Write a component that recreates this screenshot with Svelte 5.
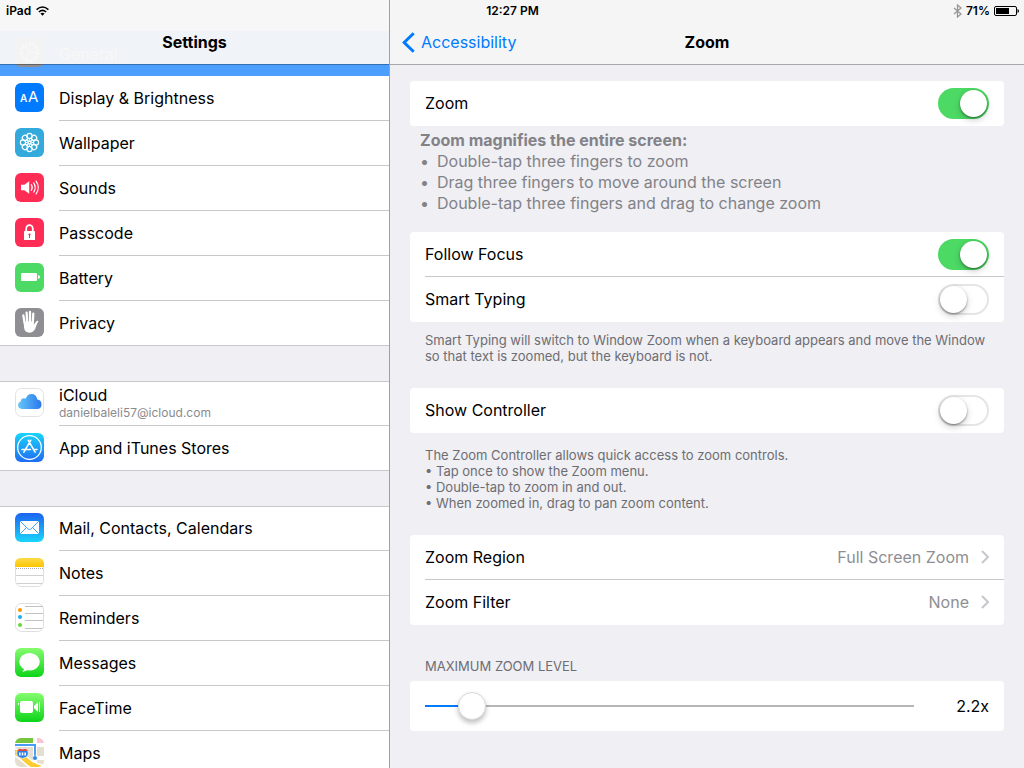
<script lang="ts">
  type Item = { id: string; label: string; detail?: string };

  const groups: Item[][] = [
    [
      { id: 'display', label: 'Display & Brightness' },
      { id: 'wallpaper', label: 'Wallpaper' },
      { id: 'sounds', label: 'Sounds' },
      { id: 'passcode', label: 'Passcode' },
      { id: 'battery', label: 'Battery' },
      { id: 'privacy', label: 'Privacy' }
    ],
    [
      { id: 'icloud', label: 'iCloud', detail: 'danielbaleli57@icloud.com' },
      { id: 'stores', label: 'App and iTunes Stores' }
    ],
    [
      { id: 'mail', label: 'Mail, Contacts, Calendars' },
      { id: 'notes', label: 'Notes' },
      { id: 'reminders', label: 'Reminders' },
      { id: 'messages', label: 'Messages' },
      { id: 'facetime', label: 'FaceTime' },
      { id: 'maps', label: 'Maps' }
    ]
  ];

  const petals = [0, 45, 90, 135, 180, 225, 270, 315];
  const minZoom = 1.2;
  const maxZoom = 15;

  let zoom = $state(true);
  let followFocus = $state(true);
  let smartTyping = $state(false);
  let showController = $state(false);
  let level = $state(2.2);

  let filled = $derived(((level - minZoom) / (maxZoom - minZoom)) * 100);
</script>

{#snippet icon(id: string)}
  <svg class="icon" viewBox="0 0 29 29" aria-hidden="true">
    {#if id === 'general'}
      <rect width="29" height="29" rx="6" fill="#8e8e93" />
      <circle cx="14.5" cy="14.5" r="8" fill="none" stroke="#fff" stroke-width="1.5" />
      <circle cx="14.5" cy="14.5" r="9.5" fill="none" stroke="#fff" stroke-width="2" stroke-dasharray="2 2" />
      <path d="M14.5 14.5h8M14.5 14.5l-4-7M14.5 14.5l-4 7" stroke="#fff" stroke-width="1.3" />
    {:else if id === 'display'}
      <rect width="29" height="29" rx="6" fill="#007aff" />
      <text x="5" y="19" font-size="10" font-weight="600" fill="#fff">A</text>
      <text x="13" y="19" font-size="15" fill="#fff">A</text>
    {:else if id === 'wallpaper'}
      <rect width="29" height="29" rx="6" fill="#34aadc" />
      <g fill="none" stroke="#fff" stroke-width="1.2">
        {#each petals as angle}
          <circle cx="14.5" cy="8" r="2.6" transform="rotate({angle} 14.5 14.5)" />
          <circle cx="14.5" cy="11.3" r="1.3" stroke-width="0.8" transform="rotate({angle + 22.5} 14.5 14.5)" />
        {/each}
        <circle cx="14.5" cy="14.5" r="1.4" />
      </g>
    {:else if id === 'sounds'}
      <rect width="29" height="29" rx="6" fill="#ff2d55" />
      <path d="M6 11.7h3.4l4.8-3.4v12.4l-4.8-3.4H6z" fill="#fff" />
      <path d="M16.3 11.7q1.9 2.8 0 5.6M18.7 9.9q3.1 4.6 0 9.2M21.1 8.1q4.4 6.4 0 12.8" fill="none" stroke="#fff" stroke-width="1.2" stroke-linecap="round" />
    {:else if id === 'passcode'}
      <rect width="29" height="29" rx="6" fill="#ff2d55" />
      <path d="M11.2 13.5v-2.8a3.3 3.6 0 0 1 6.600 0v2.800" fill="none" stroke="#fff" stroke-width="1.8" />
      <rect x="9" y="13" width="11" height="9" rx="0.6" fill="#fff" />
      <circle cx="14.5" cy="16.5" r="1.1" fill="#ff2d55" />
      <path d="M14.5 17v3" stroke="#ff2d55" />
    {:else if id === 'battery'}
      <rect width="29" height="29" rx="6" fill="#4cd964" />
      <rect x="6" y="10" width="16" height="8" rx="1" fill="#fff" />
      <path d="M23 12q2 .3 2 2t-2 2z" fill="#fff" />
    {:else if id === 'privacy'}
      <rect width="29" height="29" rx="6" fill="#8e8e93" />
      <path d="M8.3 7.4l1.4 8M11.6 4.7l.6 10M15 4v10M18.300 5.700l-.5 9" fill="none" stroke="#fff" stroke-width="2.3" stroke-linecap="round" />
      <path d="M8.700 13.500h10.100v3.300l2.500-3.500q1-.9 2.200-.4-1.500 2.600-2.400 5.300-1.600 6.500-6.500 6.500-4.900 0-5.600-5.200z" fill="#fff" />
    {:else if id === 'icloud'}
      <defs>
        <linearGradient id="cloud" x1="0" x2="1">
          <stop offset="0" stop-color="#67c6f8" />
          <stop offset="1" stop-color="#2978ed" />
        </linearGradient>
      </defs>
      <rect x="0.5" y="0.5" width="28" height="28" rx="6" fill="#fff" stroke="#e2e2e4" />
      <path d="M7 21q-4-.3-4-3.900 0-2.700 2.700-3.500.2-3.400 3.300-3.400 1 0 1.700.5Q12.300 6 16.500 6q5 0 5.800 5.600 4.200.8 4.200 4.800 0 4.300-4.400 4.600z" fill="url(#cloud)" />
    {:else if id === 'stores'}
      <defs>
        <linearGradient id="store" x2="0" y2="1">
          <stop offset="0" stop-color="#19d4fd" />
          <stop offset="1" stop-color="#1e6cf2" />
        </linearGradient>
      </defs>
      <rect width="29" height="29" rx="6" fill="url(#store)" />
      <g fill="none" stroke="#fff" stroke-linecap="round">
        <circle cx="14.5" cy="14.5" r="11.8" stroke-width="1.3" />
        <path d="M13.3 7.3l6.800 11.900M15.700 7.300L8.900 19.200M7 16.500h8.500M18.500 16.500H22" stroke-width="1.6" />
      </g>
    {:else if id === 'mail'}
      <defs>
        <linearGradient id="mail" x2="0" y2="1">
          <stop offset="0" stop-color="#1d62f0" />
          <stop offset="1" stop-color="#1ad5fd" />
        </linearGradient>
      </defs>
      <rect width="29" height="29" rx="6" fill="url(#mail)" />
      <rect x="5" y="8" width="19" height="13" rx="1" fill="#fff" />
      <path d="M5.300 8.300l7.800 7.700q1.400 1.200 2.800 0l7.800-7.700M5.300 20.700l6-6M23.700 20.700l-6-6" fill="none" stroke="#2c96f6" stroke-width="0.9" />
    {:else if id === 'notes'}
      <defs>
        <linearGradient id="notes" x2="0" y2="1">
          <stop offset="0" stop-color="#ffdb4a" />
          <stop offset="1" stop-color="#fbc500" />
        </linearGradient>
      </defs>
      <rect x="0.5" y="0.5" width="28" height="28" rx="6" fill="#fff" stroke="#dedee0" />
      <path d="M0 9V6q0-6 6-6h17q6 0 6 6v3z" fill="url(#notes)" />
      <path d="M1 10.5h27" stroke="#aaa" stroke-dasharray="1 1" />
      <path d="M1 17.5h27M2 25.5h25" stroke="#d0d0d2" />
    {:else if id === 'reminders'}
      <rect x="0.5" y="0.5" width="28" height="28" rx="6" fill="#fff" stroke="#dedee0" />
      <circle cx="5" cy="7" r="2" fill="#ff9500" />
      <circle cx="5" cy="14" r="2" fill="#1badf8" />
      <circle cx="5" cy="22" r="2" fill="#63da38" />
      <path d="M10 3.5h18M10 10.5h18M10 17.5h18M10 25.5h17" stroke="#c2c2c5" />
    {:else if id === 'messages'}
      <defs>
        <linearGradient id="messages" x2="0" y2="1">
          <stop offset="0" stop-color="#86fc6f" />
          <stop offset="1" stop-color="#0cd419" />
        </linearGradient>
      </defs>
      <rect width="29" height="29" rx="6" fill="url(#messages)" />
      <ellipse cx="14.5" cy="13.8" rx="10.3" ry="8.8" fill="#fff" />
      <path d="M9.300 19.500q0 2.800-2 4.200 3.800-.2 6.200-2.700z" fill="#fff" />
    {:else if id === 'facetime'}
      <defs>
        <linearGradient id="facetime" x2="0" y2="1">
          <stop offset="0" stop-color="#86fc6f" />
          <stop offset="1" stop-color="#0cd419" />
        </linearGradient>
      </defs>
      <rect width="29" height="29" rx="6" fill="url(#facetime)" />
      <rect x="5" y="8" width="13" height="12" rx="2" fill="#fff" />
      <path d="M3 10h1v2H3zM19 13l4-4v10l-4-4zM24 9h1v10h-1z" fill="#fff" />
    {:else if id === 'maps'}
      <clipPath id="map"><rect width="29" height="29" rx="6" /></clipPath>
      <g clip-path="url(#map)">
        <rect width="29" height="29" fill="#e4dfcf" />
        <path d="M0 0h18v5H0z" fill="#76c63f" />
        <path d="M22 0h7v5h-7z" fill="#fbc4d4" />
        <path d="M18 0h4v29h-4zM0 5h29v4H0zM18 18h11v4H18z" fill="#fff" />
        <path d="M-2 13Q6 17 12 23t18 8" fill="none" stroke="#fff" stroke-width="8" />
        <path d="M-2 13Q6 17 12 23t18 8" fill="none" stroke="#ffcb2d" stroke-width="5" />
        <path d="M0 7h20v11" fill="none" stroke="#4a9cf6" stroke-width="2" />
        <circle cx="20" cy="20" r="2.3" fill="#2d86ee" stroke="#fff" stroke-width="0.5" />
        <path d="M2.500 12l2.300-1.300 2.700.8 2.700-.8 2.300 1.300q3 7-5 8.500-8-1.500-5-8.500z" fill="#2f7fe4" stroke="#fff" stroke-width="0.7" />
        <path d="M2.500 12l2.300-1.300 2.700.8 2.700-.8 2.300 1.300v1h-10z" fill="#e0483e" />
        <path d="M4.800 14.500v3M7.500 14.500v3M10.200 14.500v3" stroke="#fff" stroke-width="1.6" />
      </g>
    {/if}
  </svg>
{/snippet}

{#snippet navRow(item: Item, selected: boolean)}
  <a class="row" class:selected href="#{item.id}">
    {@render icon(item.id)}
    <span class="row-text">
      {item.label}
      {#if item.detail}<small>{item.detail}</small>{/if}
    </span>
  </a>
{/snippet}

{#snippet chevron()}
  <svg class="chevron" viewBox="0 0 8 14" aria-hidden="true">
    <path d="M1 1l6 6-6 6" fill="none" stroke="#c7c7cc" stroke-width="2" />
  </svg>
{/snippet}

<div class="screen">
  <div class="status">
    <div class="status-side">
      iPad
      <svg class="wifi" viewBox="0 0 13 10" aria-label="Wi-Fi">
        <g fill="none" stroke="#000" stroke-width="1.6">
          <path d="M0.600 3.600q5.900-5.200 11.800 0" />
          <path d="M2.900 6q3.600-3.200 7.200 0" />
        </g>
        <path d="M4.400 7.500q2.100-1.700 4.200 0L6.500 9.800z" />
      </svg>
    </div>
    <div>12:27 PM</div>
    <div class="status-side end">
      <svg class="bluetooth" viewBox="0 0 9 14" aria-label="Bluetooth">
        <path d="M1 4l7 6-3.500 3V1L8 4l-7 6" fill="none" stroke="#979797" stroke-width="1.3" />
      </svg>
      71%
      <svg class="charge" viewBox="0 0 25 10" aria-hidden="true">
        <rect x="0.5" y="0.5" width="22" height="9" rx="1.5" fill="none" stroke="#000" />
        <rect x="2" y="2" width="13" height="6" />
        <path d="M23.500 3q1.500.3 1.500 2t-1.500 2z" />
      </svg>
    </div>
  </div>

  <aside class="sidebar">
    <header class="bar translucent">
      <h2>Settings</h2>
    </header>
    <nav>
      {@render navRow({ id: 'general', label: 'General' }, true)}
      {#each groups as group}
        <div class="group">
          {#each group as item (item.id)}
            {@render navRow(item, false)}
          {/each}
        </div>
      {/each}
    </nav>
  </aside>

  <main>
    <header class="bar detail-bar">
      <a class="back" href="#accessibility">
        <svg viewBox="0 0 13 21" aria-hidden="true">
          <path d="M11.700 1.200L2.200 10.500l9.500 9.300" fill="none" stroke="#007aff" stroke-width="3" />
        </svg>
        Accessibility
      </a>
      <h1>Zoom</h1>
    </header>

    <div class="content">
      <div class="card">
        <label class="cell">Zoom <input class="switch" type="checkbox" bind:checked={zoom} /></label>
      </div>
      <div class="intro">
        <strong>Zoom magnifies the entire screen:</strong>
        <ul>
          <li>Double-tap three fingers to zoom</li>
          <li>Drag three fingers to move around the screen</li>
          <li>Double-tap three fingers and drag to change zoom</li>
        </ul>
      </div>

      <div class="card">
        <label class="cell">Follow Focus <input class="switch" type="checkbox" bind:checked={followFocus} /></label>
        <label class="cell">Smart Typing <input class="switch" type="checkbox" bind:checked={smartTyping} /></label>
      </div>
      <p class="note">
        Smart Typing will switch to Window Zoom when a keyboard appears and move the Window so that text is zoomed, but the keyboard is not.
      </p>

      <div class="card">
        <label class="cell">Show Controller <input class="switch" type="checkbox" bind:checked={showController} /></label>
      </div>
      <p class="note controller-note">
        The Zoom Controller allows quick access to zoom controls.<br />
        • Tap once to show the Zoom menu.<br />
        • Double-tap to zoom in and out.<br />
        • When zoomed in, drag to pan zoom content.
      </p>

      <div class="card">
        <a class="cell" href="#region">Zoom Region <span class="value">Full Screen Zoom {@render chevron()}</span></a>
        <a class="cell" href="#filter">Zoom Filter <span class="value">None {@render chevron()}</span></a>
      </div>

      <label class="caption" for="level">MAXIMUM ZOOM LEVEL</label>
      <div class="card slider">
        <input id="level" type="range" min={minZoom} max={maxZoom} step="0.1" bind:value={level} style="--filled: {filled}%" />
        <output for="level">{level.toFixed(1)}x</output>
      </div>
    </div>
  </main>
</div>

<style>
  :global(body) {
    background: #efeff4;
  }

  .screen {
    position: relative;
    display: grid;
    grid-template-columns: 195fr 317fr;
    height: 100vh;
    overflow: hidden;
    font-family: Inter, Roboto, 'Liberation Sans', sans-serif;
    font-size: 16px;
    color: #000;
  }

  a {
    color: inherit;
    text-decoration: none;
  }

  /* Status bar lies over both panes */
  .status {
    position: absolute;
    z-index: 3;
    top: 0;
    left: 0;
    right: 0;
    display: grid;
    grid-template-columns: 1fr auto 1fr;
    align-items: center;
    height: 21px;
    padding: 0 5px 0 6px;
    font-size: 12px;
    font-weight: 600;
  }
  .status-side {
    display: flex;
    align-items: center;
    gap: 5px;
  }
  .end {
    justify-content: flex-end;
    gap: 4px;
  }
  .wifi {
    width: 13px;
    height: 10px;
  }
  .bluetooth {
    width: 9px;
    height: 14px;
  }
  .charge {
    width: 25px;
    height: 10px;
  }

  .bar {
    box-sizing: border-box;
    height: 65px;
    padding-top: 20px;
    border-bottom: 1px solid #a7a7ab;
    background: #f5f5f5;
  }
  h1,
  h2 {
    margin: 0;
    font-size: 16px;
    font-weight: 700;
    line-height: 44px;
    text-align: center;
  }

  /* Sidebar */
  .sidebar {
    position: relative;
    min-width: 0;
    overflow: hidden;
    border-right: 1px solid #a0a0a4;
  }
  .translucent {
    position: absolute;
    z-index: 1;
    top: 0;
    left: 0;
    right: 0;
    background: rgba(247, 247, 247, 0.96);
    border-bottom-color: rgba(0, 0, 0, 0.3);
    background-clip: padding-box;
  }
  nav {
    padding-top: 31px;
  }
  .group {
    margin-bottom: 35px;
    background: #fff;
    border-bottom: 1px solid #c8c7cc;
  }
  .group + .group .row:first-child {
    box-shadow: inset 0 1px #c8c7cc;
  }
  .row {
    display: flex;
    gap: 15px;
    box-sizing: border-box;
    height: 45px;
    padding-left: 15px;
  }
  .group .row:last-child {
    height: 44px;
  }
  .group .row:last-child .row-text {
    border-bottom: 0;
  }
  .selected {
    background: #4c9fff;
    color: #fff;
  }
  .selected .row-text {
    border-bottom: 0;
  }
  .icon {
    flex: none;
    width: 29px;
    height: 29px;
    margin-top: 7px;
  }
  .row-text {
    display: flex;
    flex: 1;
    flex-direction: column;
    justify-content: center;
    border-bottom: 1px solid #c8c7cc;
    line-height: 20px;
  }
  small {
    font-size: 12px;
    line-height: 16px;
    color: #8a8a8e;
  }

  /* Detail pane */
  main {
    min-width: 0;
    background: #efeff4;
  }
  .detail-bar {
    display: grid;
    grid-template-columns: 1fr auto 1fr;
    align-items: center;
  }
  .back {
    display: flex;
    align-items: center;
    gap: 6px;
    padding-left: 12px;
    color: #007aff;
  }
  .back svg {
    width: 13px;
    height: 21px;
  }
  .content {
    padding: 16px 20px;
  }
  .card {
    border-radius: 4px;
    background: #fff;
  }
  .cell {
    display: flex;
    align-items: center;
    justify-content: space-between;
    box-sizing: border-box;
    height: 45px;
    margin-left: 15px;
    padding-right: 15px;
    border-bottom: 1px solid #c8c7cc;
  }
  .cell:last-child {
    border-bottom-color: transparent;
  }
  .value {
    display: flex;
    align-items: center;
    gap: 12px;
    color: #8e8e93;
  }
  .chevron {
    width: 8px;
    height: 14px;
  }

  .switch {
    appearance: none;
    position: relative;
    box-sizing: border-box;
    width: 51px;
    height: 31px;
    margin: 0;
    border: 2px solid #e5e5e5;
    border-radius: 16px;
    background: #fff;
  }
  .switch::before {
    content: '';
    position: absolute;
    top: 0;
    left: 0;
    width: 27px;
    height: 27px;
    border-radius: 50%;
    background: #fff;
    box-shadow: 0 1px 2px rgba(0, 0, 0, 0.4), 0 3px 7px rgba(0, 0, 0, 0.2);
  }
  .switch:checked {
    border-color: #4cd964;
    background: #4cd964;
  }
  .switch:checked::before {
    left: auto;
    right: 0;
  }

  .intro {
    padding: 4px 10px 18px;
    line-height: 21px;
    color: #828287;
  }
  ul {
    margin: 0;
    padding: 0;
    list-style: none;
  }
  li {
    display: flex;
    gap: 8px;
  }
  li::before {
    content: '•';
  }
  .note {
    margin: 0;
    padding: 10px 15px 24px;
    font-size: 13px;
    line-height: 16px;
    color: #6d6d72;
  }
  .controller-note {
    padding-top: 14px;
  }
  .caption {
    display: block;
    padding: 33px 15px 7px;
    font-size: 13px;
    line-height: 16px;
    color: #6d6d72;
  }

  .slider {
    display: flex;
    align-items: center;
    height: 50px;
    padding: 0 15px;
  }
  input[type='range'] {
    appearance: none;
    flex: 1;
    min-width: 0;
    height: 28px;
    margin: 0;
    background: linear-gradient(to right, #007aff var(--filled), #b6b6b6 var(--filled)) center / 100% 2px no-repeat;
  }
  input[type='range']::-webkit-slider-thumb {
    appearance: none;
    width: 28px;
    height: 28px;
    border: 1px solid #d8d8d8;
    border-radius: 50%;
    background: #fff;
    box-shadow: 0 3px 5px rgba(0, 0, 0, 0.25);
  }
  output {
    width: 75px;
    text-align: right;
  }
</style>
